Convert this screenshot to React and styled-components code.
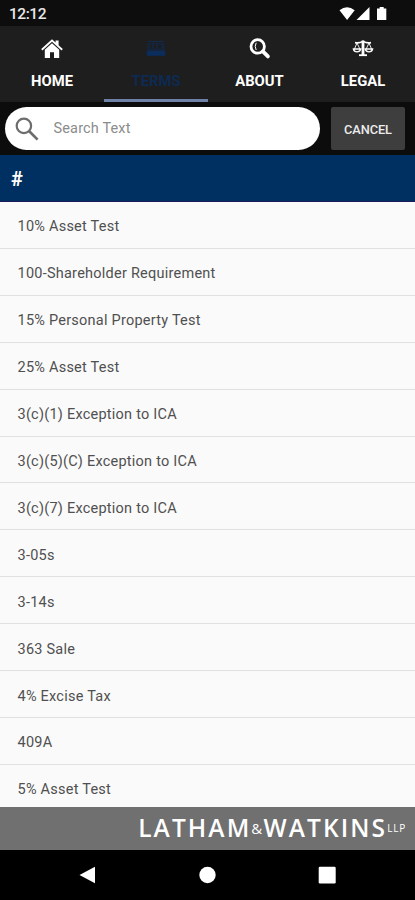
import styled, { createGlobalStyle } from 'styled-components';

const GlobalStyle = createGlobalStyle`
    * {
        box-sizing: border-box;
    }
    body {
        margin: 0;
        background: #000;
        font-family: Roboto, sans-serif;
    }
`
const Screen = styled.div`
    display: flex;
    flex-direction: column;
    width: 415px;
    height: 900px;
    overflow: hidden;
    background: #fafafa;
`
const StatusBar = styled.div`
    display: flex;
    flex: none;
    justify-content: space-between;
    align-items: center;
    height: 26px;
    padding: 2px 28px 0 9px;
    background: #0d0d0d;
    color: #e8e8e8;
`
const Clock = styled.span`
    font-size: 15.5px;
    font-weight: 500;
    letter-spacing: -.45px;
`
const Tabs = styled.nav`
    display: grid;
    flex: none;
    grid-template-columns: 104px 104px 103px 104px;
    height: 76px;
    background: #1e1e1e;
`
const Tab = styled.a`
    display: flex;
    flex-direction: column;
    align-items: center;
    padding-top: 11px;
    border-bottom: 3px solid ${({ $active }) => ($active ? '#7081a8' : 'transparent')};
    color: ${({ $active }) => ($active ? '#0d2a52' : '#fff')};
`
const TabLabel = styled.span`
    margin-top: 10px;
    font-size: 14.8px;
    font-weight: 700;
    line-height: 20px;
`
const SearchBar = styled.div`
    display: flex;
    flex: none;
    justify-content: space-between;
    align-items: flex-start;
    height: 53px;
    padding: 5px 10px 0 5px;
    background: #0c0c0c;
`
const SearchField = styled.div`
    display: flex;
    align-items: center;
    width: 315px;
    height: 43px;
    padding-left: 10px;
    border-radius: 22px;
    background: #fff;
`
const Placeholder = styled.span`
    margin-left: 14.5px;
    color: #8c8c8c;
    font-size: 14.5px;
    letter-spacing: .15px;
`
const Cancel = styled.button`
    width: 74px;
    height: 43px;
    padding: 1px 0 0;
    border: 0;
    border-radius: 2px;
    background: #3e3e3e;
    color: #ececec;
    font-family: inherit;
    font-size: 12.8px;
    font-weight: 500;
    letter-spacing: -.1px;
`
const SectionTitle = styled.h2`
    flex: none;
    height: 47px;
    margin: 0;
    padding-left: 11px;
    border-bottom: 1px solid #1b1b5c;
    background: #003061;
    color: #fff;
    font-size: 20px;
    font-weight: 700;
    line-height: 48px;
`
const List = styled.ul`
    flex: none;
    height: 605px;
    margin: 0;
    padding: 0;
    overflow: hidden;
    list-style: none;
`
const Item = styled.li`
    display: flex;
    align-items: center;
    height: 46.92px;
    padding: 4px 0 0 17.5px;
    border-bottom: 1.5px solid #e1e1e1;
    color: #505050;
    font-size: 14.5px;
    letter-spacing: .24px;
`
const Footer = styled.footer`
    display: flex;
    flex: none;
    justify-content: flex-end;
    align-items: center;
    height: 43px;
    padding: 0 9px 2px 0;
    background: #707070;
`
const Brand = styled.div`
    display: flex;
    align-items: center;
    color: #fff;
    font-family: "Open Sans", sans-serif;
    font-size: 24.5px;
    font-weight: 600;
    letter-spacing: 2.1px;
`
const Small = styled.span`
    font-size: ${({ $size }) => $size}px;
    font-weight: 500;
    letter-spacing: ${({ $gap }) => $gap || 0}px;
`
const NavBar = styled.div`
    display: flex;
    flex: none;
    justify-content: space-between;
    align-items: center;
    height: 50px;
    padding: 0 79px;
    background: #000;
`

const terms = [
    '10% Asset Test',
    '100-Shareholder Requirement',
    '15% Personal Property Test',
    '25% Asset Test',
    '3(c)(1) Exception to ICA',
    '3(c)(5)(C) Exception to ICA',
    '3(c)(7) Exception to ICA',
    '3-05s',
    '3-14s',
    '363 Sale',
    '4% Excise Tax',
    '409A',
    '5% Asset Test',
]

const StatusIcons = () => (
    <svg width="48" height="16" viewBox="0 0 48 16" fill="#fff">
        <path d="M.5 4.3Q8 -1.6 15.700 4.3L8.100 14Z" />
        <path d="M30.5 1V14H17.5Z" />
        <path d="M38 2.5h2.700V1h4v1.5h2.600V14H38z" />
    </svg>
)

const HomeIcon = () => (
    <svg width="24" height="24" viewBox="0 0 24 24" fill="#fff">
        <path d="M12 2.2 15.6 5.5V3.5h3v4.7l4.2 3.9-1.2 1.3L12 4.7 2.4 13.4l-1.2-1.3z" />
        <path d="M12 6.2 19.2 12.7V21H14v-5.8h-4V21H4.8v-8.3z" />
    </svg>
)

const TermsIcon = () => (
    <svg width="24" height="24" viewBox="0 0 24 24" fill="#0b2d5c">
        <path d="M4 4h16v1.2H4z" opacity=".7" />
        <path d="M3.5 6h17l.7 8H2.8z" opacity=".45" />
        <path d="M2.8 14h18.4v4.8H2.8z" />
        <path d="M6 7.5h2v4H6zM10 7.5h2v4h-2zM14 7.5h3v4h-3z" fill="#1a1d22" />
    </svg>
)

const AboutIcon = () => (
    <svg width="24" height="24" viewBox="0 0 24 24" fill="none" stroke="#fff">
        <circle cx="9.7" cy="9.4" r="6.7" strokeWidth="2.8" />
        <path d="M8.2 5.8Q6.2 9.4 8.2 13" strokeWidth="1" />
        <path d="m14.9 14.4 5 5" strokeWidth="3.8" strokeLinecap="round" />
    </svg>
)

const LegalIcon = () => (
    <svg width="24" height="24" viewBox="0 0 24 24" fill="none" stroke="#fff" strokeWidth="1.3">
        <path d="M4 5.6Q8 6.4 12 4.4 16 6.4 20 5.6" strokeWidth="1.6" />
        <path d="M12 3.5V18" strokeWidth="2.8" />
        <path d="M8 18.2h8" strokeWidth="1.8" />
        <path d="M6 6 3.3 12.3M6 6l3 6.3M18 6l-3 6.3M18 6l2.7 6.3" strokeWidth=".9" />
        <path d="M2.4 12h7.4Q9 14.8 6 14.8T2.4 12zM14.2 12h7.4q-.6 2.8-3.6 2.8T14.2 12z" />
    </svg>
)

const SearchIcon = () => (
    <svg width="24" height="24" viewBox="0 0 24 24" fill="none" stroke="#6d6d6d">
        <circle cx="8.9" cy="8.9" r="7.2" strokeWidth="2.2" />
        <path d="m14 14 8.6 8.6" strokeWidth="2.7" />
    </svg>
)

const tabs = [
    { label: 'HOME', Icon: HomeIcon },
    { label: 'TERMS', Icon: TermsIcon, active: true },
    { label: 'ABOUT', Icon: AboutIcon },
    { label: 'LEGAL', Icon: LegalIcon },
]

const App = () => {
    return (
        <Screen>
            <GlobalStyle />
            <StatusBar>
                <Clock>12:12</Clock>
                <StatusIcons />
            </StatusBar>
            <Tabs>
                {tabs.map(({ label, Icon, active }) => (
                    <Tab key={label} $active={active}>
                        <Icon />
                        <TabLabel>{label}</TabLabel>
                    </Tab>
                ))}
            </Tabs>
            <SearchBar>
                <SearchField>
                    <SearchIcon />
                    <Placeholder>Search Text</Placeholder>
                </SearchField>
                <Cancel>CANCEL</Cancel>
            </SearchBar>
            <SectionTitle>#</SectionTitle>
            <List>
                {terms.map((term) => <Item key={term}>{term}</Item>)}
            </List>
            <Footer>
                <Brand>
                    LATHAM<Small $size={15} $gap={1.2}>&amp;</Small>WATKINS<Small $size={10} $gap={0.8}>LLP</Small>
                </Brand>
            </Footer>
            <NavBar>
                <svg width="17" height="18" viewBox="0 0 17 18"><path d="M.5 9 16 .8v16.4z" fill="#fff" /></svg>
                <svg width="17" height="18" viewBox="0 0 17 18"><circle cx="8.5" cy="9" r="8.2" fill="#fff" /></svg>
                <svg width="18" height="18" viewBox="0 0 18 18"><rect x=".7" y=".7" width="17" height="16.8" rx="1.2" fill="#fff" /></svg>
            </NavBar>
        </Screen>
    )
}

export default App;
